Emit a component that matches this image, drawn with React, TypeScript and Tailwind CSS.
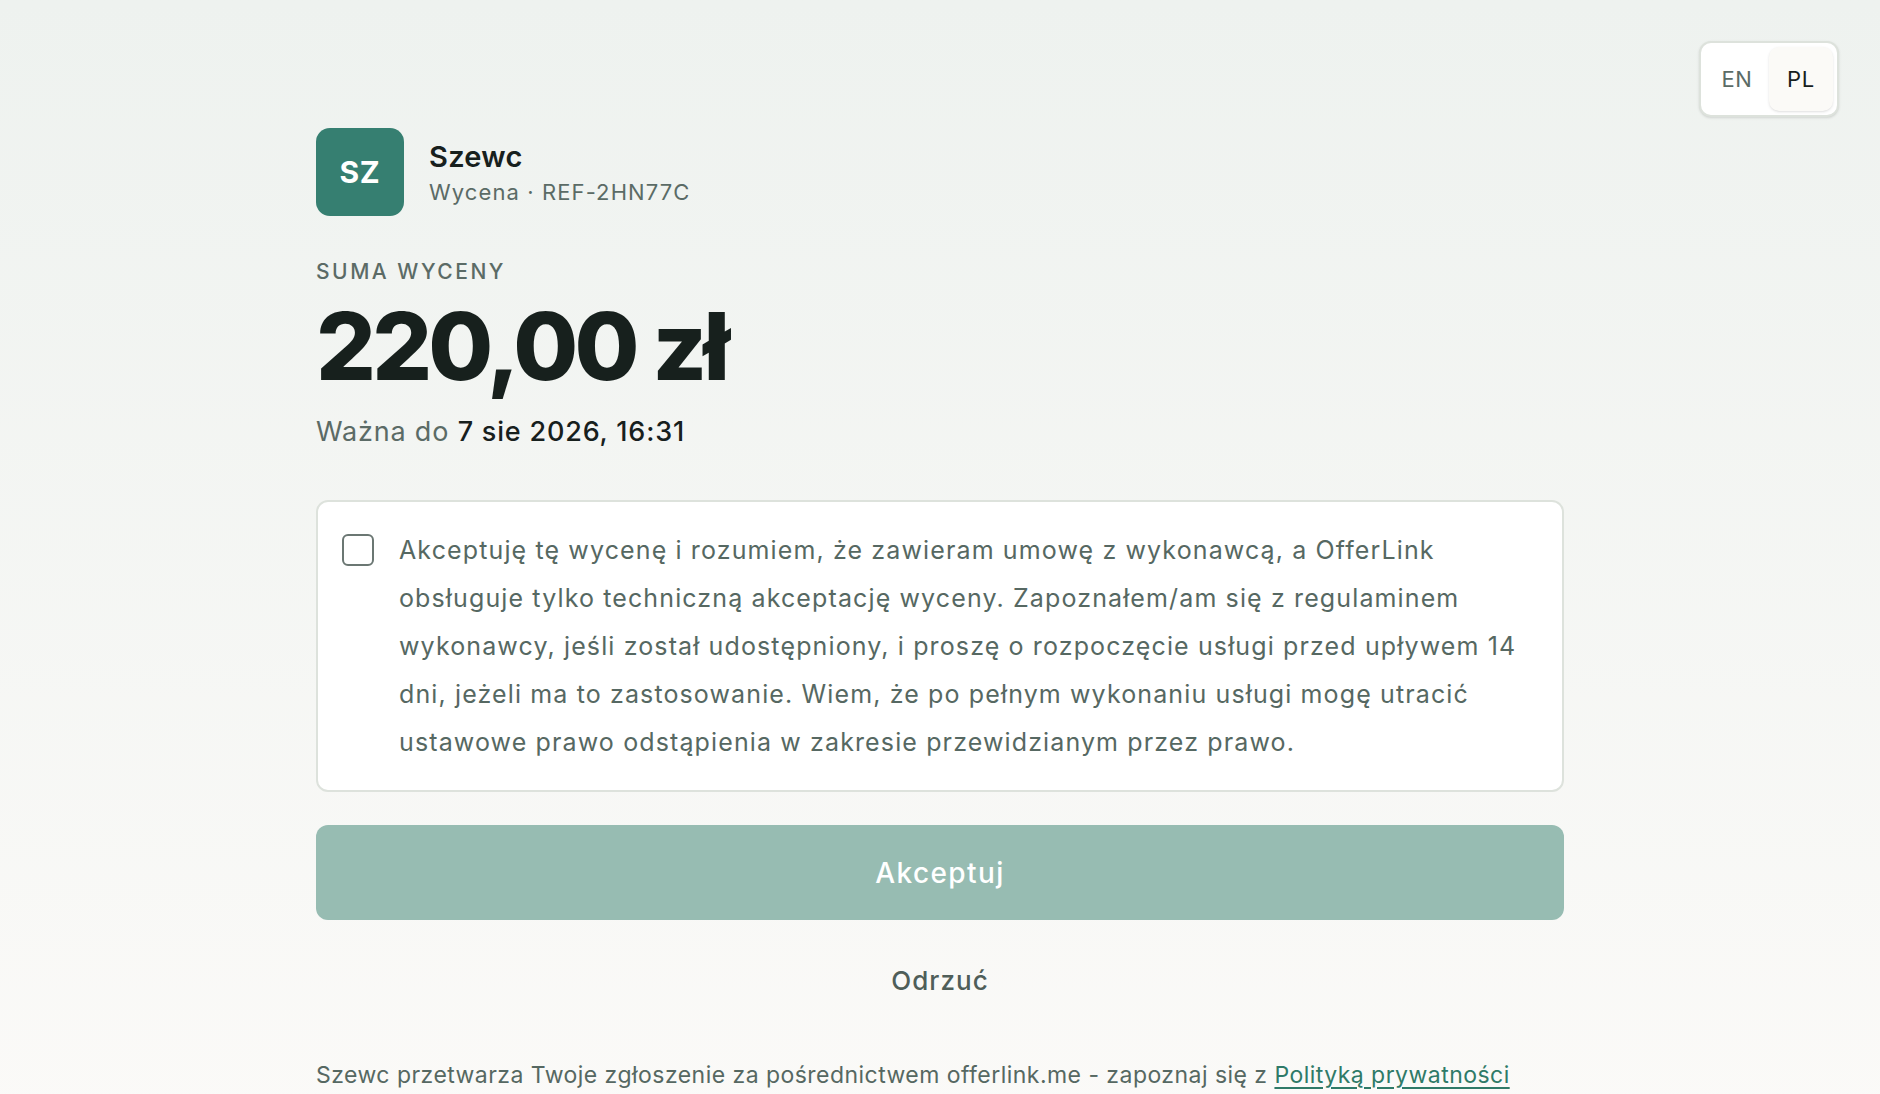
import { useState } from 'react';

export default function App() {
  const [accepted, setAccepted] = useState(false);
  const [lang, setLang] = useState<'EN' | 'PL'>('PL');

  return (
    <div
      className="relative min-h-screen bg-gradient-to-b from-[#eef2ef] to-[#fbfaf8] text-[#17201d]"
      style={{ fontFamily: 'Inter, "Noto Sans", "Liberation Sans", sans-serif' }}
    >
      {/* Language switch */}
      <div className="absolute top-[41px] right-[41px] flex rounded-[12px] border-2 border-[#dde2dc] bg-white p-[4px] shadow-sm">
        {(['EN', 'PL'] as const).map((l) => (
          <button
            key={l}
            onClick={() => setLang(l)}
            className={
              lang === l
                ? 'h-[64px] w-[64px] rounded-[10px] bg-[#fbfaf7] text-[22px] tracking-[0.03em] text-[#17201d] shadow-sm'
                : 'h-[64px] w-[64px] rounded-[10px] text-[22px] tracking-[0.03em] text-[#5b6b66]'
            }
          >
            {l}
          </button>
        ))}
      </div>

      <main className="mx-auto w-[1248px] pt-[128px] pb-[40px]">
        {/* Header */}
        <div className="flex items-center gap-[25px]">
          <div className="flex h-[88px] w-[88px] items-center justify-center rounded-[14px] bg-[#367f71] text-[30px] font-bold tracking-[0.02em] text-white">
            SZ
          </div>
          <div className="pt-[4px]">
            <div className="text-[29px] font-semibold leading-[36px] tracking-[0.01em] text-[#17201d]">Szewc</div>
            <div className="text-[22px] leading-[34px] tracking-[0.05em] text-[#5b6b66]">Wycena · REF-2HN77C</div>
          </div>
        </div>

        {/* Total */}
        <div className="mt-[42px] text-[21px] leading-[28px] font-medium tracking-[0.12em] text-[#5b6b66]">
          SUMA WYCENY
        </div>
        <div className="mt-[12px] text-[94px] font-extrabold leading-[96px] tracking-[-0.04em] text-[#17201d]">
          220,00 zł
        </div>
        <div className="mt-[20px] text-[27px] leading-[36px] tracking-[0.03em] text-[#5b6b66]">
          Ważna do <span className="font-medium text-[#17201d]">7 sie 2026, 16:31</span>
        </div>

        {/* Consent */}
        <label className="mt-[50px] flex cursor-pointer items-start gap-[25px] rounded-[12px] border-2 border-[#dde2dc] bg-white px-[24px] py-[24px]">
          <span
            className={
              accepted
                ? 'mt-[8px] flex h-[32px] w-[32px] shrink-0 items-center justify-center rounded-[6px] border-2 border-[#367f71] bg-[#367f71]'
                : 'mt-[8px] flex h-[32px] w-[32px] shrink-0 items-center justify-center rounded-[6px] border-2 border-[#6b7773] bg-white'
            }
          >
            {accepted && (
              <svg width="18" height="18" viewBox="0 0 24 24" fill="none" stroke="white" strokeWidth="3" strokeLinecap="round" strokeLinejoin="round">
                <path d="M5 12l5 5 9-10" />
              </svg>
            )}
          </span>
          <input type="checkbox" className="hidden" checked={accepted} onChange={(e) => setAccepted(e.target.checked)} />
          <span className="text-[25px] leading-[48px] tracking-[0.045em] text-[#566862]">
            Akceptuję tę wycenę i rozumiem, że zawieram umowę z wykonawcą, a OfferLink obsługuje tylko techniczną
            akceptację wyceny. Zapoznałem/am się z regulaminem wykonawcy, jeśli został udostępniony, i proszę o
            rozpoczęcie usługi przed upływem 14 dni, jeżeli ma to zastosowanie. Wiem, że po pełnym wykonaniu usługi
            mogę utracić ustawowe prawo odstąpienia w zakresie przewidzianym przez prawo.
          </span>
        </label>

        {/* Actions */}
        <button
          disabled={!accepted}
          className={
            accepted
              ? 'mt-[33px] flex h-[95px] w-full items-center justify-center rounded-[12px] bg-[#367f71] text-[28px] font-medium tracking-[0.05em] text-white'
              : 'mt-[33px] flex h-[95px] w-full items-center justify-center rounded-[12px] bg-[#97bcb2] text-[28px] font-medium tracking-[0.05em] text-white'
          }
        >
          Akceptuj
        </button>
        <div className="mt-[33px] flex justify-center">
          <button className="text-[26px] font-medium leading-[56px] tracking-[0.04em] text-[#4f5e59]">Odrzuć</button>
        </div>

        <p className="mt-[50px] text-[23px] leading-[32px] tracking-[0.02em] text-[#566862]">
          Szewc przetwarza Twoje zgłoszenie za pośrednictwem offerlink.me - zapoznaj się z{' '}
          <a href="#" className="text-[#2f7a68] underline underline-offset-4">
            Polityką prywatności
          </a>
        </p>
      </main>
    </div>
  );
}
